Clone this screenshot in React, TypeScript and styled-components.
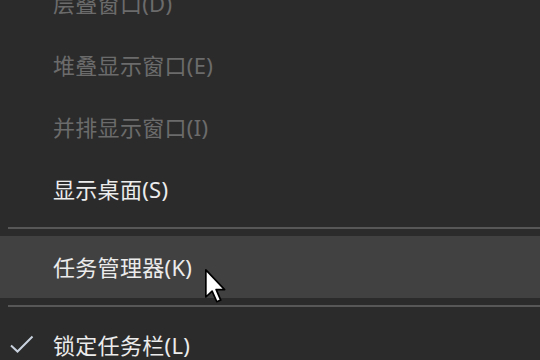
import React from 'react';
import styled, { createGlobalStyle } from 'styled-components';

const GlobalStyle = createGlobalStyle`
    html, body {
        margin: 0;
        padding: 0;
        background: #2b2b2b;
        overflow: hidden;
    }
    body {
        width: 540px;
        height: 360px;
        font-family: "Noto Sans", "Noto Sans CJK SC", sans-serif;
    }
`;

const Menu = styled.div`
    display: flex;
    flex-direction: column;
    width: 560px;
    margin-top: -28px;
    background: #2b2b2b;
`;

const MenuItem = styled.div<{ $disabled?: boolean; $hover?: boolean }>`
    position: relative;
    display: flex;
    align-items: center;
    box-sizing: border-box;
    height: 62px;
    padding: 0 0 3px 53px;
    font-size: 22px;
    letter-spacing: 0.3px;
    color: ${(p) => (p.$disabled ? '#6b6b6b' : '#ececec')};
    background: ${(p) => (p.$hover ? '#414141' : 'transparent')};
`;

const Separator = styled.div`
    display: flex;
    align-items: center;
    height: 16px;
    padding-left: 8px;

    &:after {
        content: '';
        display: block;
        flex: 1;
        height: 2px;
        background: #575757;
    }
`;

const Check = styled.svg`
    position: absolute;
    left: 10px;
    top: 50%;
    margin-top: -10px;
`;

const Cursor = styled.svg`
    position: absolute;
    left: 205px;
    top: 33px;
`;

const CheckMark = () => (
    <Check width="24" height="18" viewBox="0 0 24 18">
        <path d="M1 10.5 L7.5 16.5 L22.5 1.5" fill="none" stroke="#c9d2de" strokeWidth="2" />
    </Check>
);

const Pointer = () => (
    <Cursor width="22" height="34" viewBox="0 0 13 20">
        <path
            d="M0.5 0.5 L0.5 16.5 L4.2 13 L7 19.3 L9.3 18.3 L6.6 12.1 L11.6 12.1 Z"
            fill="#ffffff"
            stroke="#000000"
            strokeWidth="1"
            strokeLinejoin="round"
        />
    </Cursor>
);

const App = () => (
    <>
        <GlobalStyle />
        <Menu>
            <MenuItem $disabled>层叠窗口(D)</MenuItem>
            <MenuItem $disabled>堆叠显示窗口(E)</MenuItem>
            <MenuItem $disabled>并排显示窗口(I)</MenuItem>
            <MenuItem>显示桌面(S)</MenuItem>
            <Separator />
            <MenuItem $hover>
                任务管理器(K)
                <Pointer />
            </MenuItem>
            <Separator />
            <MenuItem>
                <CheckMark />
                锁定任务栏(L)
            </MenuItem>
        </Menu>
    </>
);

export default App;
